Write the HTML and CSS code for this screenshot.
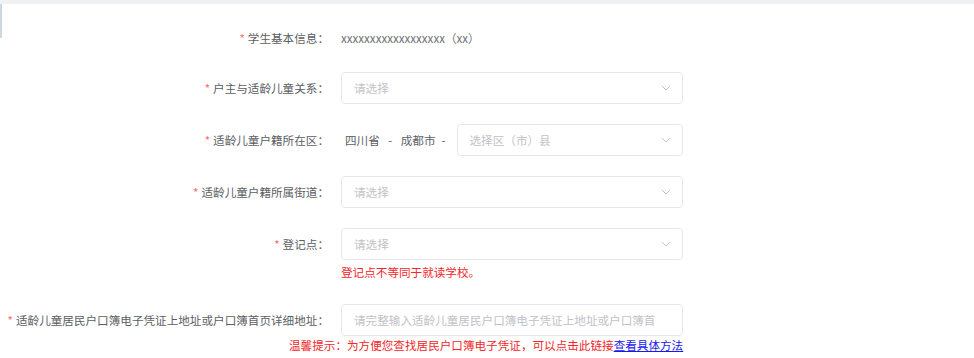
FILE: index.html
```html
<!DOCTYPE html>
<html lang="zh-CN">
<head>
<meta charset="utf-8">
<title>表单</title>
<link rel="stylesheet" href="styles.css">
</head>
<body>
<div class="topbar"></div>
<div class="page">
  <div class="edge"></div>
  <form class="form">
    <div class="item item-first">
      <label class="label"><span class="star">*</span>学生基本信息：</label>
      <div class="content value">xxxxxxxxxxxxxxxxxx（xx）</div>
    </div>
    <div class="item">
      <label class="label"><span class="star">*</span>户主与适龄儿童关系：</label>
      <div class="content">
        <div class="select"><span class="ph">请选择</span><svg class="arrow" viewBox="0 0 10 6"><path d="M1 1l4 4 4-4" fill="none" stroke="#c0c4cc" stroke-width="1"/></svg></div>
      </div>
    </div>
    <div class="item">
      <label class="label"><span class="star">*</span>适龄儿童户籍所在区：</label>
      <div class="content region">
        <span class="fixed fixed-first">四川省</span><span class="sep">-</span><span class="fixed">成都市</span><span class="sep sep2">-</span>
        <div class="select select-small"><span class="ph">选择区（市）县</span><svg class="arrow" viewBox="0 0 10 6"><path d="M1 1l4 4 4-4" fill="none" stroke="#c0c4cc" stroke-width="1"/></svg></div>
      </div>
    </div>
    <div class="item">
      <label class="label"><span class="star">*</span>适龄儿童户籍所属街道：</label>
      <div class="content">
        <div class="select"><span class="ph">请选择</span><svg class="arrow" viewBox="0 0 10 6"><path d="M1 1l4 4 4-4" fill="none" stroke="#c0c4cc" stroke-width="1"/></svg></div>
      </div>
    </div>
    <div class="item item-top">
      <label class="label label-box"><span class="star">*</span>登记点：</label>
      <div class="content col">
        <div class="select"><span class="ph">请选择</span><svg class="arrow" viewBox="0 0 10 6"><path d="M1 1l4 4 4-4" fill="none" stroke="#c0c4cc" stroke-width="1"/></svg></div>
        <div class="error">登记点不等同于就读学校。</div>
      </div>
    </div>
    <div class="item item-last">
      <label class="label"><span class="star">*</span>适龄儿童居民户口簿电子凭证上地址或户口簿首页详细地址：</label>
      <div class="content">
        <div class="select input"><span class="ph">请完整输入适龄儿童居民户口簿电子凭证上地址或户口簿首</span></div>
      </div>
    </div>
    <div class="hint">温馨提示：为方便您查找居民户口簿电子凭证，可以点击此链接<a href="#" class="link">查看具体方法</a></div>
  </form>
</div>
</body>
</html>
```

FILE: styles.css
```css
html, body {
  margin: 0;
  padding: 0;
  background: #ffffff;
}
body {
  font-family: "Noto Sans CJK SC", "Noto Sans", sans-serif;
  font-size: 11.6px;
  color: #606266;
}
.topbar {
  height: 4px;
  background: #f0f1f3;
}
.page {
  position: relative;
}
.edge {
  position: absolute;
  left: 0;
  top: 0;
  width: 2px;
  height: 34px;
  background: #c9d8e4;
}
.form {
  margin: 0;
  padding-top: 18px;
}
.item {
  display: flex;
  align-items: center;
  margin-bottom: 20px;
}
.item-first {
  height: 32px;
  margin-bottom: 18px;
}
.item-top {
  align-items: flex-start;
  margin-bottom: 24px;
}
.item-last {
  margin-bottom: 2px;
}
.label {
  width: 341px;
  flex-shrink: 0;
  box-sizing: border-box;
  padding-right: 12px;
  text-align: right;
  white-space: nowrap;
  color: #5c5e63;
}
.label-box {
  line-height: 32px;
}
.star {
  color: #f56c6c;
  margin-right: 3px;
}
.content {
  width: 342px;
  display: flex;
  align-items: center;
}
.col {
  flex-direction: column;
  align-items: stretch;
}
.value {
  color: #707277;
}
.select {
  box-sizing: border-box;
  width: 342px;
  height: 32px;
  border: 1px solid #e4e7ed;
  border-radius: 4px;
  display: flex;
  align-items: center;
  justify-content: space-between;
  padding: 0 11px 0 12px;
  background: #fff;
}
.select-small {
  width: 227px;
}
.ph {
  color: #bfc2c8;
  white-space: nowrap;
}
.arrow {
  width: 10px;
  height: 6px;
}
.region .fixed {
  color: #606266;
  white-space: nowrap;
}
.region .fixed-first {
  margin-left: 4px;
}
.sep {
  width: 21px;
  text-align: center;
  color: #606266;
}
.sep2 {
  width: 16px;
  margin-right: 5px;
}
.error {
  margin-top: 4px;
  line-height: 16px;
  color: #f2262b;
  white-space: nowrap;
}
.hint {
  padding-left: 289px;
  line-height: 14px;
  color: #f2262b;
  white-space: nowrap;
}
.link {
  color: #1a1aee;
  text-decoration: underline;
}
```
